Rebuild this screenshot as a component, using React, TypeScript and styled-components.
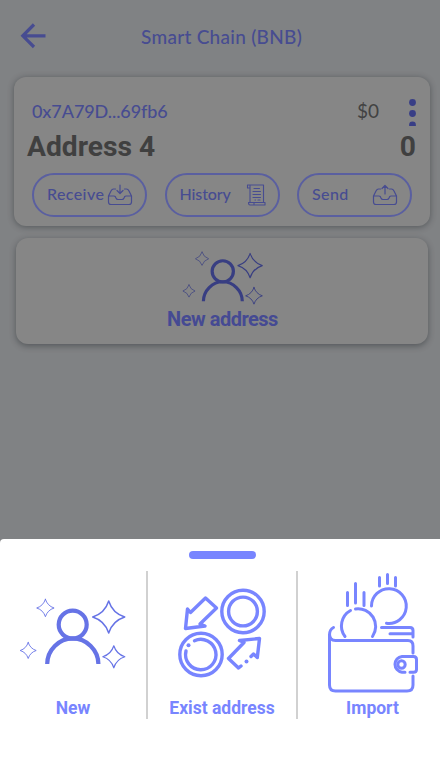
import React from "react";
import styled, { createGlobalStyle } from "styled-components";

const Global = createGlobalStyle`
  * { box-sizing: border-box; }
  body { margin: 0; background: #808284; overflow: hidden; }
  svg { display: block; fill: none; stroke-linecap: round; stroke-linejoin: round; }
`;

const Screen = styled.div`
  width: 440px;
  height: 760px;
  display: flex;
  flex-direction: column;
  background: #808284;
  overflow: hidden;
`;

const Header = styled.header`
  height: 77px;
  flex: none;
  display: grid;
  grid-template-columns: 141px auto 1fr;
  color: #474c91;
`;

const Back = styled.button`
  border: 0;
  background: none;
  padding: 23px 0 0 20px;
  align-self: start;

  svg { stroke-linecap: butt; stroke-linejoin: miter; }
`;

const Title = styled.h1`
  margin: 24px 0 0;
  font: 500 19px/26px Lato, sans-serif;
  letter-spacing: 0.28px;
  white-space: nowrap;
`;

const AccountCard = styled.section`
  height: 149px;
  flex: none;
  margin: 0 10px 0 14px;
  border-radius: 12px;
  background: #868686;
  box-shadow: 0 1px 6px rgba(30, 35, 40, 0.45);
`;

const AddressRow = styled.div`
  display: flex;
  height: 54px;
  padding: 22px 14px 0 18px;
`;

const Hash = styled.span`
  margin-top: -1px;
  font: 500 18px/26px Lato, sans-serif;
  letter-spacing: -0.08px;
  color: #474c91;
  flex: 1;
`;

const Fiat = styled.span`
  margin: -1px 30px 0 0;
  font: 400 19px/26px Lato, sans-serif;
  color: #424242;
`;

const NameRow = styled.div`
  display: flex;
  justify-content: space-between;
  height: 42px;
  padding: 0 14px 0 13px;
  font: 700 28.2px/31px Roboto, sans-serif;
  color: #404040;
`;

const Actions = styled.div`
  display: flex;
  gap: 17.5px;
  padding-left: 18px;
`;

const ActionButton = styled.button<{ $tracking: number }>`
  width: 115px;
  height: 44px;
  padding: 0 12px 0 13px;
  display: flex;
  align-items: center;
  justify-content: space-between;
  border: 2px solid #5a5fa0;
  border-radius: 22px;
  background: none;
  color: #474c91;
  font: 500 16px/22px Lato, sans-serif;
  letter-spacing: ${(p) => p.$tracking}px;
`;

const ActionText = styled.span`
  margin-top: -2px;
`;

const NewCard = styled.section`
  height: 106px;
  flex: none;
  margin: 12px 12px 0 16px;
  padding: 13px 0 0 1px;
  display: flex;
  flex-direction: column;
  align-items: center;
  border-radius: 12px;
  background: #868686;
  box-shadow: 0 2px 6px rgba(30, 35, 40, 0.45);
`;

const NewLabel = styled.span`
  font: 700 20px/26px Roboto, sans-serif;
  letter-spacing: -0.5px;
  color: #454a93;
`;

const Sheet = styled.section`
  height: 221px;
  flex: none;
  margin-top: auto;
  border-radius: 4px 0 0 0;
  background: #fff;
  display: flex;
  flex-direction: column;
`;

const Handle = styled.div`
  width: 67px;
  height: 8px;
  margin: 12px 0 12px 189px;
  border-radius: 4px;
  background: #7885ff;
`;

const Options = styled.div`
  display: grid;
  grid-template-columns: 148px 150px 142px;
  height: 148px;
`;

const Option = styled.button<{ $divided?: boolean; $shift?: number }>`
  border: 0;
  border-right: ${(p) => (p.$divided ? "2px solid #d1d1d1" : "0")};
  padding: 0 0 0 ${(p) => p.$shift ?? 0}px;
  background: none;
  display: flex;
  flex-direction: column;
  align-items: center;
  color: #7885ff;
`;

const Picture = styled.span`
  height: 124px;
  flex: none;
`;

const OptionLabel = styled.span`
  height: 24px;
  font: 700 17.5px/27px Roboto, sans-serif;
  white-space: nowrap;
`;

const Figure = styled.g`
  stroke-width: 4.2px;
  stroke-linecap: butt;
`;

const Dots = styled.svg`
  && { fill: #383e86; }
`;

function star(cx: number, cy: number, r: number) {
  const k = r * 0.24;
  return `M${cx} ${cy - r}Q${cx + k} ${cy - k} ${cx + r} ${cy}Q${cx + k} ${cy + k} ${cx} ${cy + r}Q${cx - k} ${cy + k} ${cx - r} ${cy}Q${cx - k} ${cy - k} ${cx} ${cy - r}Z`;
}

const Person = ({ width, height, color, viewBox }: { width: number; height: number; color: string; viewBox: string }) => (
  <svg width={width} height={height} viewBox={viewBox} stroke={color}>
    <Figure>
      <circle cx="52.7" cy="34.6" r="14" />
      <path d="M27.2 74C27.2 60 39 48.3 52.7 48.3S78.4 60 78.4 74" />
    </Figure>
    <path strokeWidth="1.5" d={star(88.7, 27, 16)} />
    <path strokeWidth="1.2" d={star(93.8, 66.8, 11)} />
    <path strokeWidth="0.9" d={star(25.4, 18, 8.7)} />
    <path strokeWidth="0.9" d={star(8.2, 60.5, 8)} />
  </svg>
);

const Tray = ({ up }: { up?: boolean }) => (
  <svg width="26" height="22" viewBox="0 0 26 22" stroke="#474c91" strokeWidth="1.2">
    <path d="M8.500 5H6.500Q5 5 4 7L1.500 12V18Q1.500 20.500 4 20.500H22Q24.500 20.500 24.500 18V12L22 7Q21 5 19.500 5H17.500M1.500 12H7Q8.500 12 9 14Q9.500 15.500 11 15.500H15Q16.500 15.500 17 14Q17.500 12 19 12H24.500" />
    <path d={up ? "M13 10V1.500M10 4.500L13 1.500L16 4.500" : "M13 1V9.500M10 6.500L13 9.500L16 6.500"} />
  </svg>
);

const Scroll = () => (
  <svg width="20" height="22" viewBox="0 0 20 22" stroke="#474c91" strokeWidth="1.1">
    <path d="M4 4H1.500V1H17.500V18.500M4 1V18.500M8 21H19V18.500H8V21ZM8 21H4Q2.500 21 2.500 18.500H8" />
    <path d="M8 4.500H13.500M7 7.500H14.500M7 10.500H14.500M7 13.500H14.500M9 16H9.500M12 16H14" />
  </svg>
);

const Exchange = () => (
  <svg width="90" height="124" viewBox="177 571 90 124" stroke="#7885ff" strokeWidth="3.4">
    <circle cx="243" cy="611.5" r="21.2" />
    <circle cx="243" cy="611.5" r="14.4" />
    <circle cx="201" cy="654.5" r="21.2" />
    <path d="M186 651A15.200 15.200 0 1 0 194.500 640.700" />
    <path d="M205.500 598L216.500 608L200 624L205 626L185.500 628.500L187.500 609L190.500 612.500Z" />
    <path d="M241 666L238.500 668L228.500 658.500L244 642.500L239.500 640.500L259.500 638.500L257.300 657.500L253.500 654L251 656.500" />
    <circle cx="188.500" cy="645.300" r="2" fill="#7885ff" stroke="none" />
    <circle cx="246.500" cy="661.500" r="2" fill="#7885ff" stroke="none" />
  </svg>
);

const Wallet = () => (
  <svg width="92" height="124" viewBox="327 571 92 124" stroke="#7885ff" strokeWidth="3">
    <path d="M333.500 627.500Q329.500 629.500 329.500 635V685Q329.500 691 335.500 691H407Q413 691 413 685V676M413 653V646Q413 640.500 408 640.500H335.500Q329.500 640.500 329.500 634" />
    <path d="M381.500 627.500H410Q413 627.500 413 630.500V637M390 633.700H412" />
    <path d="M345 636.500A17.600 17.600 0 0 1 350.500 610.500M355.500 609A17.600 17.600 0 0 1 372.500 636.500" />
    <path d="M371.500 606A17.400 17.400 0 1 1 386.500 623.300" />
    <path d="M347.500 592.500V605.500M355.500 583.500V603M364 592.500V605.500M379.500 577.500V586M387.500 574.500V583.500M395.500 577.500V586" />
    <path d="M405 672.200H402A7.900 7.900 0 0 1 402 656.500H413.500Q416.500 656.500 416.500 659.500V669.500Q416.500 672.200 413.500 672.200H410" />
    <circle cx="401.5" cy="664.5" r="3.7" />
  </svg>
);

export default function App() {
  return (
    <Screen>
      <Global />
      <Header>
        <Back aria-label="Back">
          <svg width="26" height="26" viewBox="0 0 26 26" stroke="#474c91" strokeWidth="3.2">
            <path d="M14 1.500L2.800 12.800L14 24M3 12.800H25.500" />
          </svg>
        </Back>
        <Title>Smart Chain (BNB)</Title>
      </Header>
      <AccountCard>
        <AddressRow>
          <Hash>0x7A79D...69fb6</Hash>
          <Fiat>$0</Fiat>
          <Dots width="7" height="27" viewBox="0 0 7 27">
            <circle cx="3.5" cy="3.5" r="3.4" />
            <circle cx="3.5" cy="14.5" r="3.4" />
            <circle cx="3.5" cy="26" r="3.4" />
          </Dots>
        </AddressRow>
        <NameRow><span>Address 4</span><span>0</span></NameRow>
        <Actions>
          <ActionButton $tracking={0.4}><ActionText>Receive</ActionText><Tray /></ActionButton>
          <ActionButton $tracking={-0.1}><ActionText>History</ActionText><Scroll /></ActionButton>
          <ActionButton $tracking={0.4}><ActionText>Send</ActionText><Tray up /></ActionButton>
        </Actions>
      </AccountCard>
      <NewCard>
        <Person width={82} height={55} color="#383e82" viewBox="-1 8.5 108 71" />
        <NewLabel>New address</NewLabel>
      </NewCard>
      <Sheet>
        <Handle />
        <Options>
          <Option $divided>
            <Picture><Person width={108} height={124} color="#6673e6" viewBox="-1 -19 108 124" /></Picture>
            <OptionLabel>New</OptionLabel>
          </Option>
          <Option $divided>
            <Picture><Exchange /></Picture>
            <OptionLabel>Exist address</OptionLabel>
          </Option>
          <Option $shift={7}>
            <Picture><Wallet /></Picture>
            <OptionLabel>Import</OptionLabel>
          </Option>
        </Options>
      </Sheet>
    </Screen>
  );
}
